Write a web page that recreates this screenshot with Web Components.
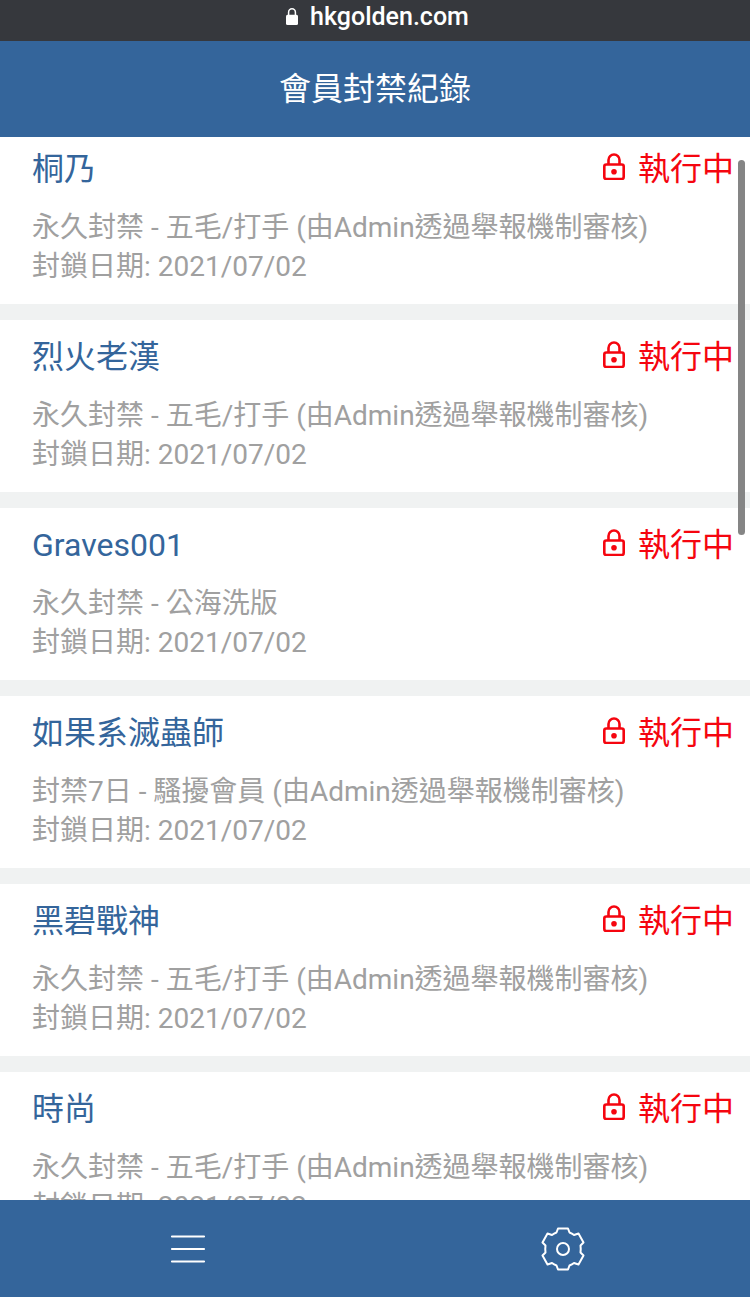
<!DOCTYPE html>
<html lang="zh-Hant">
<head>
<meta charset="utf-8">
<title>會員封禁紀錄</title>
<style>
  html, body { margin: 0; padding: 0; height: 100%; overflow: hidden; }
  body { font-family: Roboto, "Noto Sans CJK TC", sans-serif; }
</style>
</head>
<body>

<template id="app-shell-template">
  <style>
    :host { display: flex; flex-direction: column; width: 750px; height: 1297px; background: #fff; }
    .content { position: relative; flex: 1; min-height: 0; overflow: hidden; }
    .scroll-thumb {
      position: absolute; top: 23px; right: 5px; width: 7px; height: 375px;
      background: #858585; border-radius: 4px;
    }
  </style>
  <slot name="top"></slot>
  <div class="content">
    <slot></slot>
    <div class="scroll-thumb"></div>
  </div>
  <slot name="bottom"></slot>
</template>

<template id="url-bar-template">
  <style>
    :host {
      display: flex; align-items: center; justify-content: center; gap: 12px;
      height: 41px; padding: 0 0 9px 5px; box-sizing: border-box;
      background: #36383d; color: #fff;
      font: 500 25px Roboto, sans-serif;
    }
    svg { display: block; }
  </style>
  <svg width="12" height="17" viewBox="0 0 12 17">
    <path d="M2.600 7V4.200a3.400 3.400 0 0 1 6.800 0V7" fill="none" stroke="#fff" stroke-width="1.500"/>
    <rect y="6.800" width="12" height="10.200" rx="1.500" fill="#fff"/>
  </svg>
  <span><slot></slot></span>
</template>

<template id="page-header-template">
  <style>
    :host {
      display: flex; align-items: center; justify-content: center;
      height: 96px; background: #34659b; color: #fff;
      font-size: 32px; line-height: 40px;
    }
  </style>
  <slot></slot>
</template>

<template id="ban-list-template">
  <style>
    :host { display: flex; flex-direction: column; gap: 16px; margin-top: -5px; background: #f0f2f2; }
  </style>
  <slot></slot>
</template>

<template id="ban-item-template">
  <style>
    :host {
      display: block; height: 172px; box-sizing: border-box;
      padding: 17px 16px 0 32px; background: #fff;
    }
    .top { display: flex; align-items: center; justify-content: space-between; height: 40px; }
    .name { color: #34659b; font-size: 32px; line-height: 40px; }
    .status { display: flex; align-items: center; gap: 13px; color: #f5050f; font-size: 32px; line-height: 40px; }
    svg { display: block; margin-top: -5px; }
    .detail { margin-top: 19px; color: #a0a0a0; font-size: 28px; line-height: 39px; white-space: nowrap; }
  </style>
  <div class="top">
    <span class="name"><slot name="name"></slot></span>
    <span class="status">
      <svg width="22" height="27" viewBox="0 0 22 27" fill="none" stroke="#f5050f" stroke-width="2.600">
        <path d="M5.500 11.500V7a5.500 5.500 0 0 1 11 0v4.500"/>
        <rect x="1.300" y="11.500" width="19.400" height="14.500" rx="2"/>
        <circle cx="11" cy="18.700" r="2.800" fill="#f5050f" stroke="none"/>
      </svg>
      執行中
    </span>
  </div>
  <div class="detail"><slot name="reason"></slot><br><slot name="date"></slot></div>
</template>

<template id="bottom-nav-template">
  <style>
    :host {
      display: grid; grid-template-columns: 1fr 1fr; height: 97px;
      background: #34659b;
    }
    div { display: flex; align-items: center; justify-content: center; }
    svg { display: block; }
  </style>
  <div>
    <svg width="36" height="30" viewBox="0 0 36 30" stroke="#fff" stroke-width="2.200" stroke-linecap="round">
      <path d="M2 2.500h32M2 15h32M2 27.500h32"/>
    </svg>
  </div>
  <div>
    <svg width="44" height="44" viewBox="0 0 44 44" fill="none" stroke="#fff" stroke-width="2" stroke-linejoin="round">
      <path d="M17 1.500H27L28.500 5.500Q31 6.500 33 8L37.500 6.500 42.500 15.500 39.500 18.500Q40 22 39.500 25.500L42.500 28.500 37.500 37.500 33 36Q31 37.500 28.500 38.500L27 42.500H17L15.500 38.500Q13 37.500 11 36L6.500 37.500 1.500 28.500 4.500 25.500Q4 22 4.500 18.500L1.500 15.500 6.500 6.500 11 8Q13 6.500 15.500 5.500Z"/>
      <circle cx="22" cy="22" r="6"/>
    </svg>
  </div>
</template>

<app-shell>
  <url-bar slot="top">hkgolden.com</url-bar>
  <page-header slot="top">會員封禁紀錄</page-header>

  <ban-list>
    <ban-item><span slot="name">桐乃</span><span slot="reason">永久封禁 - 五毛/打手 (由Admin透過舉報機制審核)</span><span slot="date">封鎖日期: 2021/07/02</span></ban-item>
    <ban-item><span slot="name">烈火老漢</span><span slot="reason">永久封禁 - 五毛/打手 (由Admin透過舉報機制審核)</span><span slot="date">封鎖日期: 2021/07/02</span></ban-item>
    <ban-item><span slot="name">Graves001</span><span slot="reason">永久封禁 - 公海洗版</span><span slot="date">封鎖日期: 2021/07/02</span></ban-item>
    <ban-item><span slot="name">如果系滅蟲師</span><span slot="reason">封禁7日 - 騷擾會員 (由Admin透過舉報機制審核)</span><span slot="date">封鎖日期: 2021/07/02</span></ban-item>
    <ban-item><span slot="name">黑碧戰神</span><span slot="reason">永久封禁 - 五毛/打手 (由Admin透過舉報機制審核)</span><span slot="date">封鎖日期: 2021/07/02</span></ban-item>
    <ban-item><span slot="name">時尚</span><span slot="reason">永久封禁 - 五毛/打手 (由Admin透過舉報機制審核)</span><span slot="date">封鎖日期: 2021/07/02</span></ban-item>
  </ban-list>

  <bottom-nav slot="bottom"></bottom-nav>
</app-shell>

<script>
  // every element just clones its template into an open shadow root
  const names = ['app-shell', 'url-bar', 'page-header', 'ban-list', 'ban-item', 'bottom-nav'];
  names.forEach((name) => {
    customElements.define(name, class extends HTMLElement {
      constructor() {
        super();
        const template = document.getElementById(name + '-template');
        this.attachShadow({ mode: 'open' }).appendChild(template.content.cloneNode(true));
      }
    });
  });
</script>
</body>
</html>
